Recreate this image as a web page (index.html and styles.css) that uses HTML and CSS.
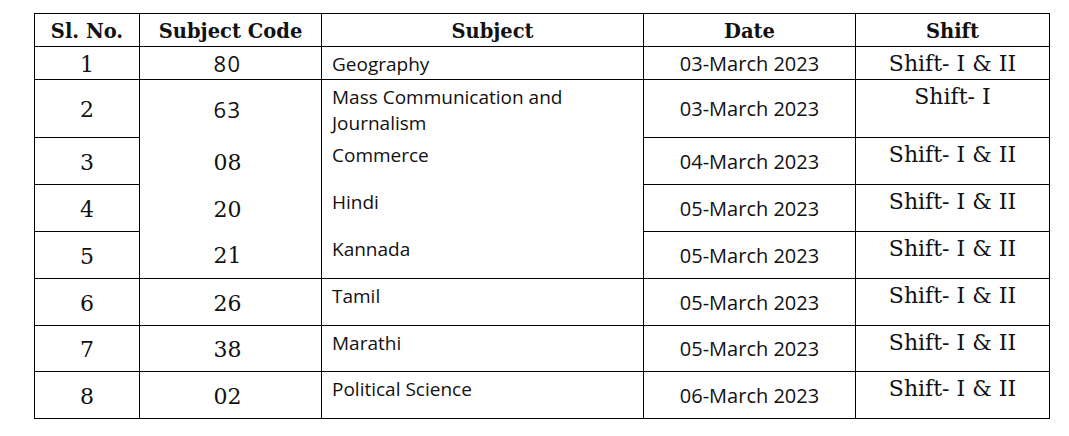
FILE: index.html
```html
<!DOCTYPE html>
<html lang="en">
<head>
<meta charset="utf-8">
<title>Exam Schedule</title>
<link rel="stylesheet" href="styles.css">
</head>
<body>
<div class="page">
  <table class="schedule">
    <colgroup>
      <col class="c-sl">
      <col class="c-code">
      <col class="c-subj">
      <col class="c-date">
      <col class="c-shift">
    </colgroup>
    <thead>
      <tr class="r-head">
        <th>Sl. No.</th>
        <th>Subject Code</th>
        <th class="th-subj">Subject</th>
        <th>Date</th>
        <th>Shift</th>
      </tr>
    </thead>
    <tbody>
      <tr class="r-1">
        <td class="sl">1</td>
        <td class="code sans">80</td>
        <td class="subj">Geography</td>
        <td class="date">03-March 2023</td>
        <td class="shift">Shift- I &amp; II</td>
      </tr>
      <tr class="r-2">
        <td class="sl">2</td>
        <td class="code sans open">63</td>
        <td class="subj open">Mass Communication and<br>Journalism</td>
        <td class="date">03-March 2023</td>
        <td class="shift">Shift- I</td>
      </tr>
      <tr class="r-n">
        <td class="sl">3</td>
        <td class="code open">08</td>
        <td class="subj open">Commerce</td>
        <td class="date">04-March 2023</td>
        <td class="shift">Shift- I &amp; II</td>
      </tr>
      <tr class="r-n">
        <td class="sl">4</td>
        <td class="code open">20</td>
        <td class="subj open">Hindi</td>
        <td class="date">05-March 2023</td>
        <td class="shift">Shift- I &amp; II</td>
      </tr>
      <tr class="r-n">
        <td class="sl">5</td>
        <td class="code">21</td>
        <td class="subj">Kannada</td>
        <td class="date">05-March 2023</td>
        <td class="shift">Shift- I &amp; II</td>
      </tr>
      <tr class="r-n">
        <td class="sl">6</td>
        <td class="code">26</td>
        <td class="subj">Tamil</td>
        <td class="date">05-March 2023</td>
        <td class="shift">Shift- I &amp; II</td>
      </tr>
      <tr class="r-s">
        <td class="sl">7</td>
        <td class="code">38</td>
        <td class="subj">Marathi</td>
        <td class="date">05-March 2023</td>
        <td class="shift">Shift- I &amp; II</td>
      </tr>
      <tr class="r-n">
        <td class="sl">8</td>
        <td class="code">02</td>
        <td class="subj">Political Science</td>
        <td class="date">06-March 2023</td>
        <td class="shift">Shift- I &amp; II</td>
      </tr>
    </tbody>
  </table>
</div>
</body>
</html>
```
FILE: styles.css
```css
html, body {
  margin: 0;
  padding: 0;
  background: #ffffff;
}

.page {
  padding: 13px 0 0 34px;
}

.schedule {
  border-collapse: collapse;
  table-layout: fixed;
  width: 1016px;
  color: #111;
}

.c-sl { width: 105px; }
.c-code { width: 182px; }
.c-subj { width: 322px; }
.c-date { width: 212px; }
.c-shift { width: 194px; }

.schedule th,
.schedule td {
  border: 1px solid #000;
  padding: 0;
}

.schedule th {
  font-family: "DejaVu Serif", serif;
  font-weight: bold;
  font-size: 19.5px;
  text-align: center;
  vertical-align: middle;
  padding-top: 2px;
}

.schedule th.th-subj {
  padding-left: 20px;
}

.r-head { height: 33px; }
.r-1 { height: 33px; }
.r-2 { height: 58px; }
.r-n { height: 47px; }
.r-s { height: 46px; }

.schedule td.sl {
  font-family: "DejaVu Serif", serif;
  font-size: 22px;
  text-align: center;
  vertical-align: middle;
  padding-top: 2px;
}

.schedule td.code {
  font-family: "DejaVu Serif", serif;
  font-size: 22px;
  text-align: center;
  vertical-align: middle;
  padding: 2px 6px 0 0;
}

.schedule td.code.sans {
  font-family: "Open Sans", sans-serif;
  font-size: 22px;
  letter-spacing: 1.5px;
  padding-top: 0;
}

.schedule td.subj {
  font-family: "Open Sans", sans-serif;
  font-size: 19px;
  text-align: left;
  vertical-align: top;
  padding: 4px 0 0 10px;
}

.schedule td.open {
  border-bottom-style: hidden;
}

.schedule td.date {
  font-family: "Open Sans", sans-serif;
  font-size: 20px;
  text-align: center;
  vertical-align: middle;
  padding-top: 0;
}

.schedule td.shift {
  font-family: "DejaVu Serif", serif;
  font-size: 22px;
  text-align: center;
  vertical-align: top;
  padding-top: 4px;
}
```
